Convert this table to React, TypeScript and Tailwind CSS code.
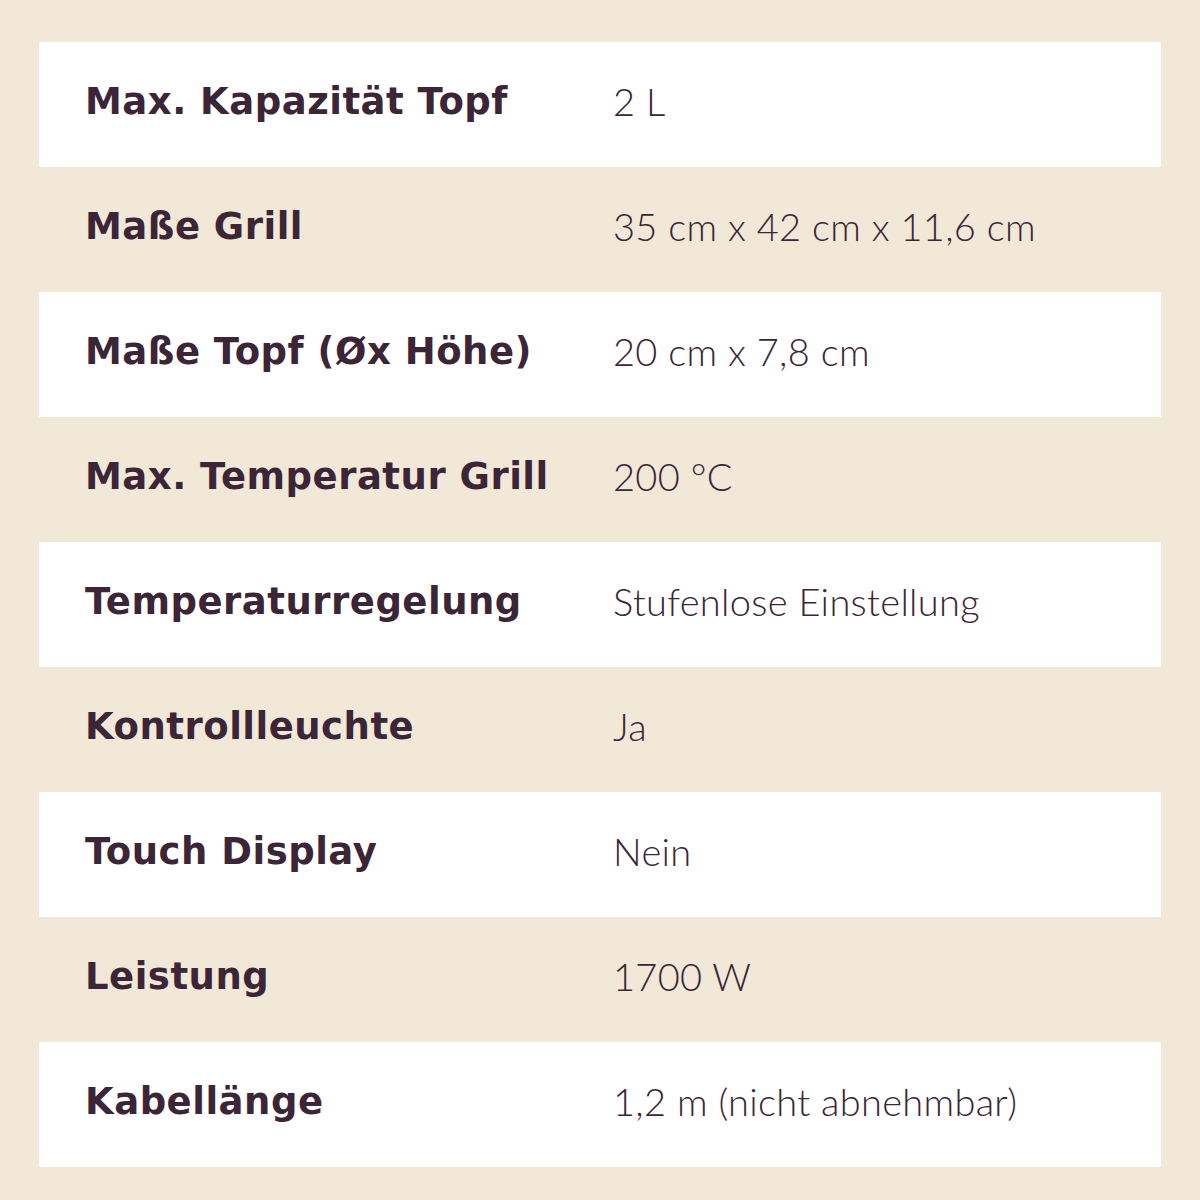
const specs = [
  { label: "Max. Kapazität Topf", value: "2 L" },
  { label: "Maße Grill", value: "35 cm x 42 cm x 11,6 cm" },
  { label: "Maße Topf (Øx Höhe)", value: "20 cm x 7,8 cm" },
  { label: "Max. Temperatur Grill", value: "200 °C" },
  { label: "Temperaturregelung", value: "Stufenlose Einstellung" },
  { label: "Kontrollleuchte", value: "Ja" },
  { label: "Touch Display", value: "Nein" },
  { label: "Leistung", value: "1700 W" },
  { label: "Kabellänge", value: "1,2 m (nicht abnehmbar)" },
]

export default function App() {
  return (
    <div className="w-[1200px] h-[1200px] bg-[#f2e8d8] pt-[42px] px-[39px] font-['Lato',sans-serif] text-[#3b2537]">
      <div className="flex flex-col">
        {specs.map((row, i) => (
          <div
            key={row.label}
            className={`flex items-center h-[125px] pb-[6px] ${i % 2 === 0 ? "bg-white" : "bg-[#f2e8d8]"}`}
          >
            <div className="w-[574px] pl-[46px] font-['DejaVu_Sans',sans-serif] text-[37px] font-bold tracking-[0.5px]">
              {row.label}
            </div>
            <div className="text-[38px] font-light tracking-[0.3px]">{row.value}</div>
          </div>
        ))}
      </div>
    </div>
  )
}
